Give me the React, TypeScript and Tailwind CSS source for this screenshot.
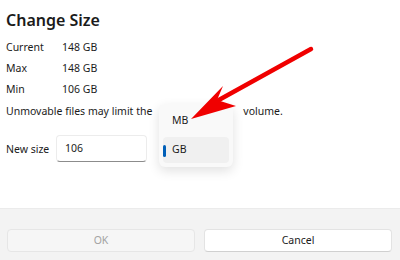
import React from 'react'

const rows = [
  { label: 'Current', value: '148 GB' },
  { label: 'Max', value: '148 GB' },
  { label: 'Min', value: '106 GB' },
]

const SizeRow: React.FC<{ label: string; value: string }> = ({ label, value }) => (
  <div className="flex h-[21px] items-center">
    <span className="w-[56px]">{label}</span>
    <span>{value}</span>
  </div>
)

const UnitMenu: React.FC = () => (
  <div className="absolute left-[159px] top-[104px] w-[74px] rounded-[6px] bg-[#f9f9f9] p-[4px] shadow-[0_4px_12px_rgba(0,0,0,0.12)]">
    <div className="flex h-[26px] items-center pl-[9px]">MB</div>
    <div className="relative mt-[3px] flex h-[26px] items-center rounded-[4px] bg-[#f0f0f0] pl-[9px]">
      <span className="absolute left-0 top-[8px] h-[12px] w-[3px] rounded-full bg-[#005fb8]" />
      GB
    </div>
  </div>
)

const Pointer: React.FC = () => (
  <svg className="pointer-events-none absolute inset-0" width="400" height="260" viewBox="0 0 400 260">
    <line x1="311" y1="49" x2="217" y2="101" stroke="#f00000" strokeWidth="4.5" strokeLinecap="round" />
    <polygon points="191,119 223,86 217,100 236,106" fill="#f00000" />
  </svg>
)

export default function App() {
  return (
    <div className="relative flex h-[260px] w-[400px] flex-col overflow-hidden bg-white text-[10.5px] text-[#1b1b1b] [font-family:'Noto_Sans',sans-serif]">
      <div className="flex-1 px-[6px] pt-[8px]">
        <h1 className="text-[16px] font-semibold leading-[24px]">Change Size</h1>
        <div className="mt-[5px]">
          {rows.map((r) => (
            <SizeRow key={r.label} label={r.label} value={r.value} />
          ))}
        </div>
        <div className="mt-[2px] flex h-[20px] items-center">
          <span>Unmovable files may limit the</span>
          <span className="ml-[91px]">volume.</span>
        </div>
        <div className="mt-[13px] flex items-center">
          <span className="w-[50px] pt-[2px]">New size</span>
          <div className="flex h-[27px] w-[91px] items-center rounded-[4px] border border-[#ececec] border-b-[#8c8c8c] bg-white pl-[8px]">
            106
          </div>
        </div>
      </div>
      <div className="flex h-[52px] gap-[9px] border-t border-[#ebebeb] bg-[#f3f3f3] pl-[7px] pr-[8px] pt-[20px]">
        <button className="h-[23px] flex-1 rounded-[4px] border border-[#e6e6e6] bg-[#f6f6f6] text-[#a3a3a3]">
          OK
        </button>
        <button className="h-[23px] flex-1 rounded-[4px] border border-[#e3e3e3] border-b-[#d0d0d0] bg-white text-[#1b1b1b]">
          Cancel
        </button>
      </div>
      <UnitMenu />
      <Pointer />
    </div>
  )
}
